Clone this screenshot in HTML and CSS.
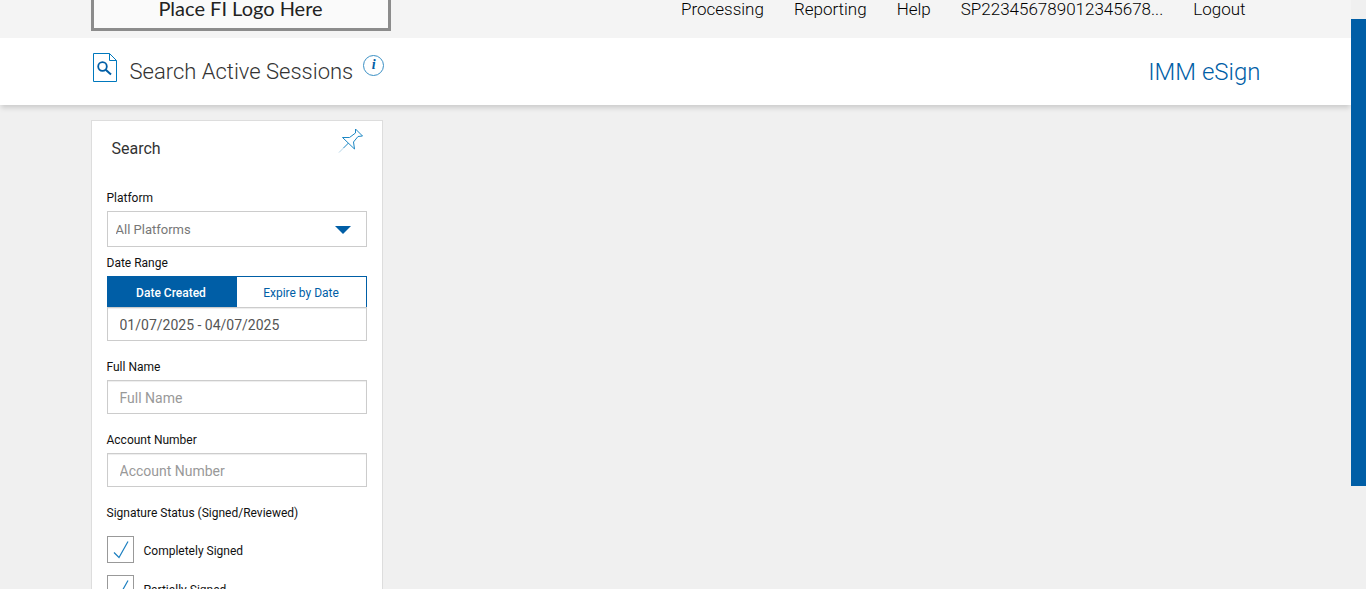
FILE: index.html
```html
<!DOCTYPE html>
<html lang="en">
<head>
    <meta charset="UTF-8">
    <meta name="viewport" content="width=device-width, initial-scale=1.0">
    <title>Search Active Sessions</title>
    <link rel="stylesheet" href="styles.css">
</head>
<body>

<div class="page">
    <header class="top-bar">
        <div class="container top-row">
            <a href="#" class="logo">Place FI Logo Here</a>
            <nav class="main-nav">
                <a href="#">Processing</a>
                <a href="#">Reporting</a>
                <a href="#">Help</a>
                <a href="#">SP223456789012345678...</a>
                <a href="#">Logout</a>
            </nav>
        </div>
    </header>

    <div class="title-bar">
        <div class="container title-row">
            <svg class="title-icon" width="26" height="30" viewBox="0 0 26 30" fill="none" stroke="#0078bd">
                <path d="M2.500 .5H18.500L25.500 7.500V28.500H2.500Z"/>
                <path d="M18.500 .5V7.500H25.500"/>
                <circle cx="11.500" cy="13.500" r="4.300" stroke="#005ea6" stroke-width="1.800"/>
                <path d="M14.700 16.700L20 21.500" stroke="#005ea6" stroke-width="2"/>
            </svg>
            <h1>Search Active Sessions</h1>
            <button type="button" class="info" aria-label="Information">i</button>
            <span class="product">IMM eSign</span>
        </div>
    </div>

    <main class="container">
        <form class="search-panel">
            <div class="panel-head">
                <h2>Search</h2>
                <button type="button" class="pin" aria-label="Pin">
                    <svg width="26" height="26" viewBox="0 0 26 26" fill="none" stroke="#1c87c4">
                        <path d="M17.500 1L24.500 8L20 8.500L15.500 14L16.500 21L4.500 9.500L11.500 9.500L17.500 5Z"/>
                        <path d="M10.500 15L5.500 20"/>
                        <path d="M5.500 20L1 24.500" stroke="#b5d6e8"/>
                    </svg>
                </button>
            </div>

            <div class="field field-select">
                <label for="platform">Platform</label>
                <select id="platform">
                    <option>All Platforms</option>
                </select>
            </div>

            <div class="field">
                <label for="dateRange">Date Range</label>
                <div class="tabs">
                    <button type="button" class="tab active">Date Created</button>
                    <button type="button" class="tab">Expire by Date</button>
                </div>
                <input type="text" id="dateRange" value="01/07/2025 - 04/07/2025">
            </div>

            <div class="field">
                <label for="fullName">Full Name</label>
                <input type="text" id="fullName" placeholder="Full Name">
            </div>

            <div class="field">
                <label for="accountNumber">Account Number</label>
                <input type="text" id="accountNumber" placeholder="Account Number">
            </div>

            <fieldset class="status">
                <legend>Signature Status (Signed/Reviewed)</legend>
                <label class="check"><input type="checkbox" checked><span>Completely Signed</span></label>
                <label class="check"><input type="checkbox" checked><span>Partially Signed</span></label>
            </fieldset>
        </form>
    </main>
</div>

<div class="scroll-track">
    <div class="scroll-thumb"></div>
</div>

</body>
</html>
```

FILE: styles.css
```css
* {
    box-sizing: border-box;
}

body {
    margin: 0;
    height: 100vh;
    display: flex;
    overflow: hidden;
    background-color: #f0f0f0;
    font-family: Roboto, "Liberation Sans", sans-serif;
    color: #111;
}

a {
    color: inherit;
    text-decoration: none;
}

button, input, select {
    font-family: inherit;
    border-radius: 0;
}

.page {
    flex: 1;
    min-width: 0;
    overflow: hidden;
}

.container {
    max-width: 1170px;
    margin: 0 auto;
}

/* Header */
.top-bar {
    background-color: #f4f4f4;
    padding-bottom: 7px;
}

.top-row {
    display: flex;
    justify-content: space-between;
    align-items: flex-start;
}

.logo {
    width: 300px;
    height: 31px;
    border: 3px solid #8c8c8c;
    border-top: none;
    background-color: #fafafa;
    font-family: Lato, sans-serif;
    font-size: 20px;
    line-height: 16px;
    text-align: center;
    color: #222;
}

.main-nav {
    display: flex;
    gap: 30px;
    padding-right: 15px;
    font-size: 17px;
    font-weight: 300;
    line-height: 18px;
    color: #000;
}

/* Title */
.title-bar {
    background-color: #fff;
    box-shadow: 0 4px 5px -1px rgba(0, 0, 0, 0.15);
}

.title-row {
    display: flex;
    align-items: center;
    height: 67px;
}

.title-icon {
    margin-bottom: 8px;
}

.title-row h1 {
    margin: 0 10px 0 13px;
    font-size: 22px;
    font-weight: 300;
    line-height: 28px;
    color: #333;
}

.info {
    width: 21px;
    height: 21px;
    margin-bottom: 13px;
    padding: 0;
    border: 1px solid #3a8fc4;
    border-radius: 50%;
    background: none;
    font: italic bold 14px/18px "Liberation Serif", serif;
    color: #005ea6;
}

.product {
    margin-left: auto;
    font-size: 24px;
    font-weight: 300;
    color: #005ea6;
}

/* Search panel */
.search-panel {
    width: 292px;
    margin-top: 15px;
    padding: 0 15px 15px;
    border: 1px solid #ddd;
    background-color: #fff;
}

.panel-head {
    display: flex;
    justify-content: space-between;
    align-items: flex-start;
    height: 69px;
    padding: 7px 3px 0 5px;
}

.panel-head h2 {
    margin: 11px 0 0;
    font-size: 16px;
    font-weight: 400;
    line-height: 20px;
    color: #333;
}

.pin {
    padding: 0;
    border: none;
    background: none;
}

.pin svg {
    display: block;
}

.field {
    margin-bottom: 18px;
}

.field-select {
    margin-bottom: 8px;
}

.field > label, .status legend {
    display: block;
    margin-bottom: 4px;
    padding: 0;
    font-size: 12px;
    line-height: 17px;
}

.field select {
    display: block;
    appearance: none;
    width: 100%;
    height: 36px;
    padding: 0 8px;
    border: 1px solid #ccc;
    background: #fff url("data:image/svg+xml,%3Csvg xmlns='http://www.w3.org/2000/svg' width='16' height='8'%3E%3Cpath d='M0 0H16L8 8Z' fill='%23005ea6'/%3E%3C/svg%3E") no-repeat right 15px top 14px;
    font-size: 13px;
    color: #777;
}

.field input {
    display: block;
    width: 100%;
    height: 34px;
    padding: 2px 12px 0;
    border: 1px solid #ccc;
    box-shadow: inset 0 1px 1px rgba(0, 0, 0, 0.075);
    font-size: 14px;
    color: #555;
}

.field input::placeholder {
    color: #999;
}

.tabs {
    display: flex;
}

.tab {
    width: 50%;
    height: 31px;
    padding: 2px 0 0;
    border: 1px solid #005ea6;
    border-width: 1px 1px 0 0;
    background-color: #fff;
    font-size: 12px;
    color: #005ea6;
}

.tab.active {
    background-color: #005ea6;
    font-weight: 500;
    color: #fff;
}

.status {
    margin: 0;
    padding: 0;
    border: none;
}

.status legend {
    margin-bottom: 14px;
}

.check {
    display: flex;
    align-items: center;
    gap: 10px;
    margin-bottom: 12px;
    font-size: 12px;
}

.check span {
    padding-top: 3px;
}

.check input {
    appearance: none;
    width: 27px;
    height: 27px;
    margin: 0;
    border: 1px solid #999;
    background: #fff url("data:image/svg+xml,%3Csvg xmlns='http://www.w3.org/2000/svg' width='25' height='25' fill='none' stroke='%231c7fc0' stroke-width='1.2'%3E%3Cpath d='M6 15.500L11 20.500L20 4.500'/%3E%3C/svg%3E") no-repeat center;
}

/* Scrollbar */
.scroll-track {
    display: flex;
    width: 15px;
    padding: 19px 0 103px;
    background-color: #f0f0f0;
}

.scroll-thumb {
    flex: 1;
    background-color: #005ea6;
}
```
